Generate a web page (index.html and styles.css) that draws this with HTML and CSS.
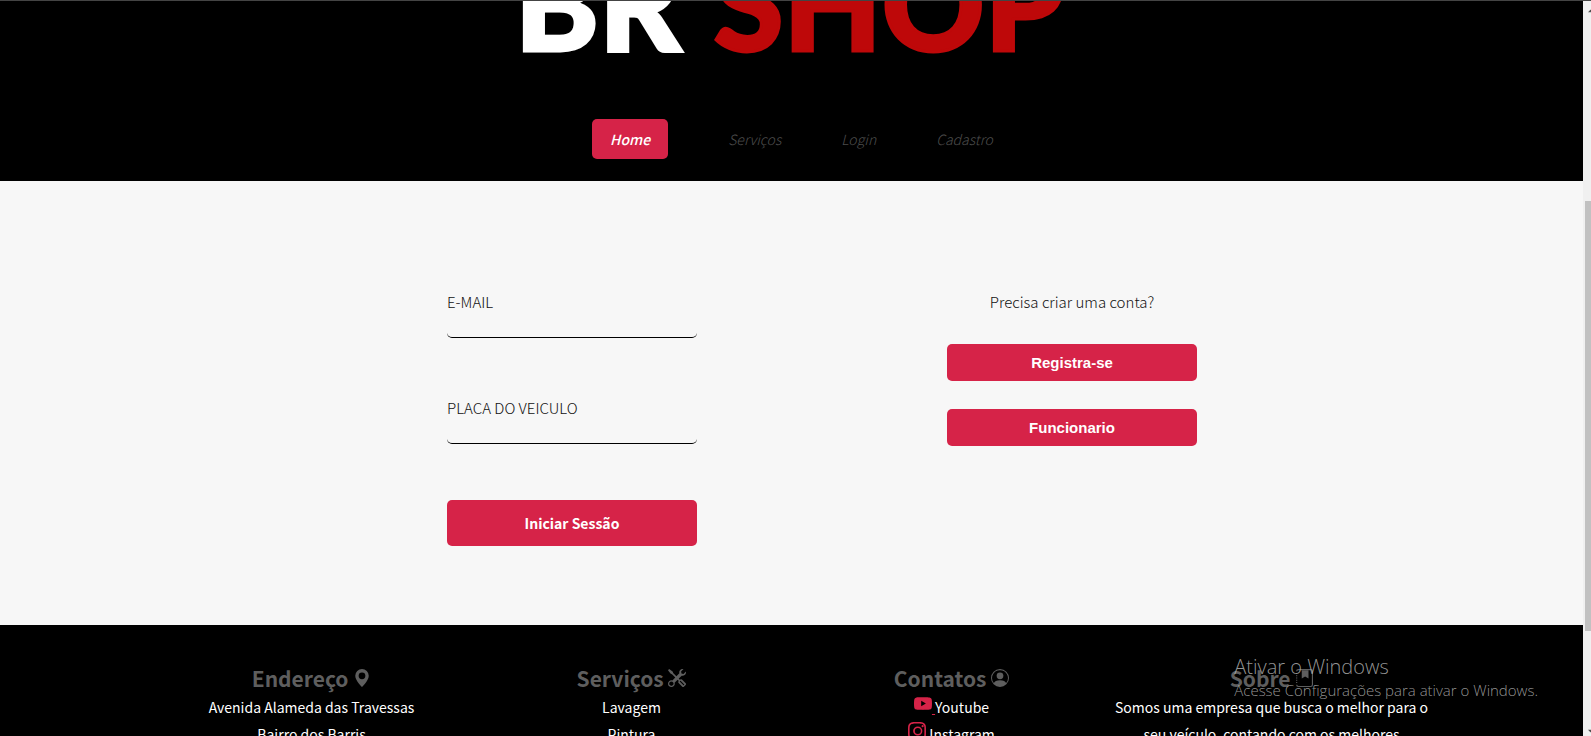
FILE: index.html
```html
<!DOCTYPE html>
<html lang="pt-BR">
<head>
<meta charset="utf-8">
<title>BR Shop - Login</title>
<link rel="stylesheet" href="styles.css">
</head>
<body>
<div class="page">
  <header class="header">
    <h1 class="logo"><span>BR</span><span class="logo-accent">SHOP</span></h1>
    <nav class="nav">
      <a class="nav-link active" href="#">Home</a>
      <a class="nav-link" href="#">Serviços</a>
      <a class="nav-link" href="#">Login</a>
      <a class="nav-link" href="#">Cadastro</a>
    </nav>
  </header>
  <main class="main">
    <form class="login">
      <label class="label" for="email">E-MAIL</label>
      <input class="field" id="email" type="text">
      <label class="label" for="placa">PLACA DO VEICULO</label>
      <input class="field" id="placa" type="text">
      <button class="button submit" type="button">Iniciar Sessão</button>
    </form>
    <section class="register">
      <p class="label question">Precisa criar uma conta?</p>
      <button class="button" type="button">Registra-se</button>
      <button class="button" type="button">Funcionario</button>
    </section>
  </main>
  <footer class="footer">
    <section class="column">
      <h2 class="title">Endereço
        <svg class="icon" viewBox="0 0 16 16"><path d="M8 16s6-5.686 6-10A6 6 0 0 0 2 6c0 4.314 6 10 6 10m0-7a3 3 0 1 1 0-6 3 3 0 0 1 0 6"/></svg></h2>
      <p>Avenida Alameda das Travessas</p>
      <p>Bairro dos Barris</p>
    </section>
    <section class="column">
      <h2 class="title">Serviços
        <svg class="icon" viewBox="0 0 16 16"><path d="M1 0 0 1l2.2 3.081a1 1 0 0 0 .815.419h.07a1 1 0 0 1 .708.293l2.675 2.675-2.617 2.654A3.003 3.003 0 0 0 0 13a3 3 0 1 0 5.878-.851l2.654-2.617.968.968-.305.914a1 1 0 0 0 .242 1.023l3.27 3.27a.997.997 0 0 0 1.414 0l1.586-1.586a.997.997 0 0 0 0-1.414l-3.27-3.27a1 1 0 0 0-1.023-.242L10.5 9.5l-.96-.96 2.68-2.643A3.005 3.005 0 0 0 16 3q0-.405-.102-.777l-2.14 2.141L12 4l-.364-1.757L13.777.102a3 3 0 0 0-3.675 3.68L7.462 6.46 4.793 3.793a1 1 0 0 1-.293-.707v-.071a1 1 0 0 0-.419-.814zm9.646 10.646a.5.5 0 0 1 .708 0l2.914 2.915a.5.5 0 0 1-.707.707l-2.915-2.914a.5.5 0 0 1 0-.708M3 11l.471.242.529.026.287.445.445.287.026.529L5 13l-.242.471-.026.529-.445.287-.287.445-.529.026L3 15l-.471-.242L2 14.732l-.287-.445L1.268 14l-.026-.529L1 13l.242-.471.026-.529.445-.287.287-.445.529-.026z"/></svg></h2>
      <p>Lavagem</p>
      <p>Pintura</p>
    </section>
    <section class="column">
      <h2 class="title">Contatos
        <svg class="icon" viewBox="0 0 16 16"><path d="M11 6a3 3 0 1 1-6 0 3 3 0 0 1 6 0"/><path fill-rule="evenodd" d="M0 8a8 8 0 1 1 16 0A8 8 0 0 1 0 8m8-7a7 7 0 0 0-5.468 11.37C3.242 11.226 4.805 10 8 10s4.757 1.225 5.468 2.37A7 7 0 0 0 8 1"/></svg></h2>
      <p><a class="social" href="#"><svg class="icon" viewBox="0 0 16 16"><path d="M8.051 1.999h.089c.822.003 4.987.033 6.11.335a2.01 2.01 0 0 1 1.415 1.42c.101.38.172.883.22 1.402l.01.104.022.26.008.104c.065.914.073 1.77.074 1.957v.075c-.001.194-.01 1.108-.082 2.06l-.008.105-.009.104c-.05.572-.124 1.14-.235 1.558a2.01 2.01 0 0 1-1.415 1.42c-1.16.312-5.569.334-6.18.335h-.142c-.309 0-1.587-.006-2.927-.052l-.17-.006-.087-.004-.171-.007-.171-.007c-1.11-.049-2.167-.128-2.654-.26a2.01 2.01 0 0 1-1.415-1.419c-.111-.417-.185-.986-.235-1.558L.09 9.82l-.008-.104A31 31 0 0 1 0 7.68v-.123c.002-.215.01-.958.064-1.778l.007-.103.003-.052.008-.104.022-.26.01-.104c.048-.519.119-1.023.22-1.402a2.01 2.01 0 0 1 1.415-1.42c.487-.13 1.544-.21 2.654-.26l.17-.007.172-.006.086-.003.171-.007A100 100 0 0 1 7.858 2zM6.4 5.209v4.818l4.157-2.408z"/></svg> </a>Youtube</p>
      <p><a class="social" href="#"><svg class="icon" viewBox="0 0 16 16"><path d="M8 0C5.829 0 5.556.01 4.703.048 3.85.088 3.269.222 2.76.42a3.9 3.9 0 0 0-1.417.923A3.9 3.9 0 0 0 .42 2.76C.222 3.268.087 3.85.048 4.7.01 5.555 0 5.827 0 8.001c0 2.172.01 2.444.048 3.297.04.852.174 1.433.372 1.942.205.526.478.972.923 1.417.444.445.89.719 1.416.923.51.198 1.09.333 1.942.372C5.555 15.99 5.827 16 8 16s2.444-.01 3.298-.048c.851-.04 1.434-.174 1.943-.372a3.9 3.9 0 0 0 1.416-.923c.445-.445.718-.891.923-1.417.197-.509.332-1.09.372-1.942C15.99 10.445 16 10.173 16 8s-.01-2.445-.048-3.299c-.04-.851-.175-1.433-.372-1.941a3.9 3.9 0 0 0-.923-1.417A3.9 3.9 0 0 0 13.24.42c-.51-.198-1.092-.333-1.943-.372C10.443.01 10.172 0 7.998 0zm0 1.442c2.136 0 2.389.007 3.232.046.78.035 1.204.166 1.486.275.373.145.64.319.92.599s.453.546.598.92c.11.281.24.705.275 1.485.039.843.047 1.096.047 3.231s-.008 2.389-.047 3.232c-.035.78-.166 1.203-.275 1.485a2.5 2.5 0 0 1-.599.919c-.28.28-.546.453-.92.598-.28.11-.704.24-1.485.276-.843.038-1.096.047-3.232.047s-2.39-.009-3.233-.047c-.78-.036-1.203-.166-1.485-.276a2.5 2.5 0 0 1-.92-.598 2.5 2.5 0 0 1-.6-.92c-.109-.281-.24-.705-.275-1.485-.038-.843-.046-1.096-.046-3.233s.008-2.388.046-3.231c.036-.78.166-1.204.276-1.486.145-.373.319-.64.599-.92s.546-.453.92-.598c.282-.11.705-.24 1.485-.276.738-.034 1.024-.044 2.515-.045zm4.988 1.328a.96.96 0 1 0 0 1.92.96.96 0 0 0 0-1.92m-4.27 1.122a4.109 4.109 0 1 0 0 8.217 4.109 4.109 0 0 0 0-8.217m0 1.441a2.667 2.667 0 1 1 0 5.334 2.667 2.667 0 0 1 0-5.334"/></svg> </a>Instagram</p>
    </section>
    <section class="column">
      <h2 class="title">Sobre
        <svg class="icon" viewBox="0 0 16 16"><path d="M5 0h9a2 2 0 0 1 2 2v12a2 2 0 0 1-2 2H3a2 2 0 0 1-2-2h1a1 1 0 0 0 1 1h11a1 1 0 0 0 1-1V2a1 1 0 0 0-1-1H3a1 1 0 0 0-1 1H1a2 2 0 0 1 2-2z"/><path d="M6 1h6v7.5L9 6.700 6 8.500z"/><path d="M1 3.500h1v1H1zM1 5.500h1v1H1zM1 7.500h1v1H1zM1 9.500h1v1H1zM1 11.500h1v1H1z"/></svg></h2>
      <p>Somos uma empresa que busca o melhor para o seu veículo, contando com os melhores</p>
    </section>
  </footer>
</div>
<div class="scrollbar" aria-hidden="true">
  <svg class="arrow" viewBox="0 0 5 4"><path d="M0 4 4 0h1v4z"/></svg>
  <div class="thumb"></div>
  <svg class="arrow" viewBox="0 0 5 4"><path d="M0 0h5v4H4z"/></svg>
</div>
<aside class="watermark">
  <p class="watermark-title">Ativar o Windows</p>
  <p class="watermark-text">Acesse Configurações para ativar o Windows.</p>
</aside>
</body>
</html>
```
FILE: styles.css
```css
* { box-sizing: border-box; }

body {
  margin: 0;
  height: 100vh;
  overflow: hidden;
  display: flex;
  position: relative;
  border-top: 1px solid #444;
  background: #000;
  font-family: "Noto Sans CJK SC", "Noto Sans", sans-serif;
  font-weight: 300;
  font-size: 15px;
  color: #111;
}

h1, h2, p { margin: 0; }

.page {
  flex: 1;
  min-width: 0;
}

.header {
  height: 180px;
  overflow: hidden;
  background: #000;
  display: flex;
  flex-direction: column;
  align-items: center;
  justify-content: flex-end;
  padding-bottom: 22px;
}

.logo {
  display: flex;
  gap: 32px;
  margin-bottom: 53px;
  padding-right: 4px;
  font-family: Lato, sans-serif;
  font-weight: 900;
  font-size: 127px;
  line-height: 127px;
  color: #fff;
  -webkit-text-stroke: 3px currentColor;
}

.logo-accent { color: #be0809; }

.nav {
  display: flex;
  align-items: center;
  gap: 60px;
  padding-left: 2px;
}

.nav-link {
  color: #4c4c4c;
  font-size: 14px;
  font-style: italic;
  line-height: 24px;
  text-decoration: none;
}

.nav-link.active {
  padding: 8px 18px;
  border-radius: 5px;
  background: #d62348;
  color: #fff;
  font-weight: 500;
}

.main {
  display: flex;
  justify-content: center;
  gap: 250px;
  padding: 109px 0 79px 61px;
  background: #f7f7f7;
}

.login, .register {
  display: flex;
  flex-direction: column;
  width: 250px;
}

.label { line-height: 24px; }

.field {
  width: 100%;
  height: 24px;
  margin-bottom: 58px;
  padding: 0 4px;
  border: 0;
  border-bottom: 1px solid #000;
  border-radius: 5px;
  background: transparent;
  font: inherit;
}

.button {
  height: 37px;
  border: 0;
  border-radius: 5px;
  background: #d62348;
  color: #fff;
  font-family: "Liberation Sans", sans-serif;
  font-size: 15px;
  font-weight: 700;
}

.submit {
  height: 46px;
  margin-top: -2px;
  font-family: "Noto Sans CJK SC", sans-serif;
  font-size: 14px;
}

.register {
  gap: 28px;
  text-align: center;
}

.question { margin-bottom: 2px; }

.footer {
  display: grid;
  grid-template-columns: repeat(4, minmax(0, 320px));
  justify-content: center;
  padding-top: 38px;
  color: #fff;
  font-size: 14px;
  font-weight: 400;
  line-height: 27px;
  text-align: center;
}

.title {
  color: #5e5e5e;
  font-size: 21px;
  font-weight: 700;
  line-height: 31px;
}

.icon {
  width: 18px;
  height: 18px;
  fill: currentColor;
}

.social { color: #d62348; }

.scrollbar {
  width: 8px;
  padding: 8px 0 3px 2px;
  display: flex;
  flex-direction: column;
  align-items: flex-end;
  background: #f0f0f0;
}

.thumb {
  width: 100%;
  height: 430px;
  margin: 188px 0 auto;
  background: #c1c1c1;
}

.arrow {
  width: 3px;
  height: 4px;
  fill: #505050;
}

.watermark {
  position: absolute;
  right: 53px;
  bottom: 35px;
  color: rgba(175, 175, 175, 0.85);
  font-family: "Open Sans", "Noto Sans", sans-serif;
}

.watermark-title {
  font-size: 20px;
  line-height: 24px;
}

.watermark-text {
  font-size: 15px;
  line-height: 22px;
}
```
